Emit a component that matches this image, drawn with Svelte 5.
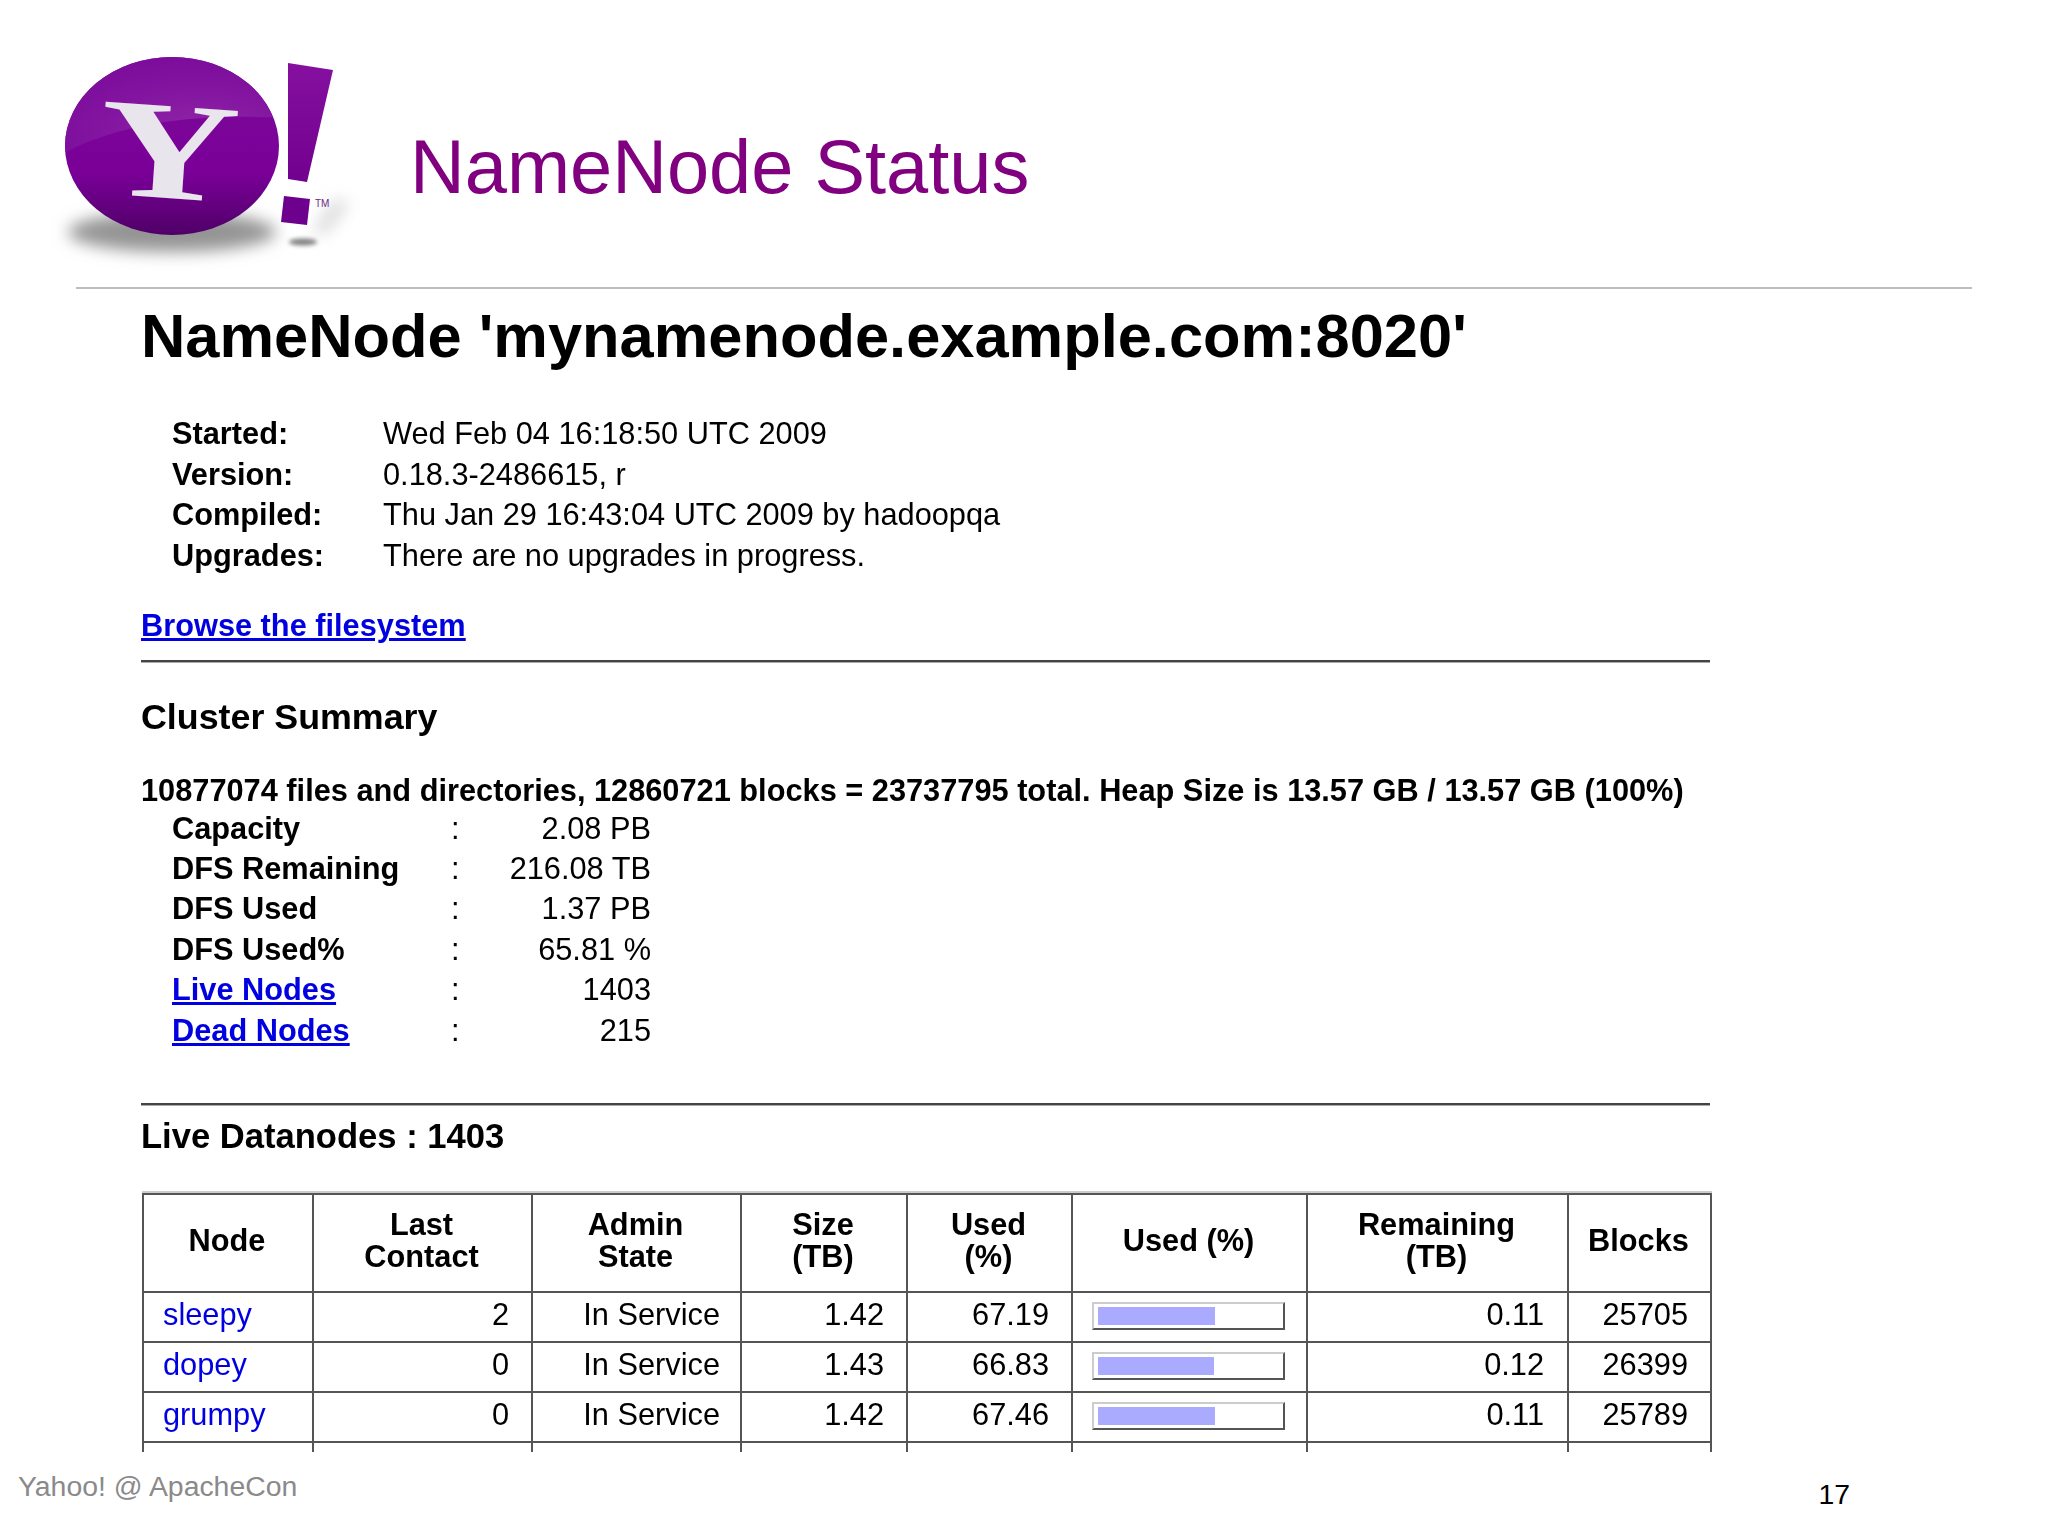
<script>
	const info = [
		['Started:', 'Wed Feb 04 16:18:50 UTC 2009'],
		['Version:', '0.18.3-2486615, r'],
		['Compiled:', 'Thu Jan 29 16:43:04 UTC 2009 by hadoopqa'],
		['Upgrades:', 'There are no upgrades in progress.']
	];
	const stats = [
		{ name: 'Capacity', value: '2.08 PB' },
		{ name: 'DFS Remaining', value: '216.08 TB' },
		{ name: 'DFS Used', value: '1.37 PB' },
		{ name: 'DFS Used%', value: '65.81 %' },
		{ name: 'Live Nodes', value: '1403', link: true },
		{ name: 'Dead Nodes', value: '215', link: true }
	];
	const nodes = [
		{ name: 'sleepy', contact: 2, size: '1.42', used: '67.19', remaining: '0.11', blocks: 25705 },
		{ name: 'dopey', contact: 0, size: '1.43', used: '66.83', remaining: '0.12', blocks: 26399 },
		{ name: 'grumpy', contact: 0, size: '1.42', used: '67.46', remaining: '0.11', blocks: 25789 }
	];
</script>

<div class="slide">
	<header>
		<svg class="logo" width="320" height="230" viewBox="40 40 320 230" role="img" aria-label="Yahoo! logo">
			<defs>
				<linearGradient id="ball" x1="0" y1="0" x2="0" y2="1">
					<stop offset="0" stop-color="#7d0a9a" />
					<stop offset="0.65" stop-color="#7a0098" />
					<stop offset="1" stop-color="#4f0068" />
				</linearGradient>
				<linearGradient id="bang" x1="0" y1="0" x2="0" y2="1">
					<stop offset="0" stop-color="#85109f" />
					<stop offset="1" stop-color="#72008f" />
				</linearGradient>
				<radialGradient id="shine" cx="0.62" cy="0.8" r="0.75">
					<stop offset="0" stop-color="#9126a6" />
					<stop offset="0.6" stop-color="#8214a0" />
					<stop offset="1" stop-color="#7c0c9b" />
				</radialGradient>
				<clipPath id="ballClip"><ellipse cx="172" cy="146" rx="107" ry="89" /></clipPath>
				<filter id="soft" x="-30%" y="-80%" width="160%" height="260%"><feGaussianBlur stdDeviation="8" /></filter>
				<filter id="softer" x="-50%" y="-100%" width="200%" height="300%"><feGaussianBlur stdDeviation="2" /></filter>
			</defs>
			<ellipse cx="172" cy="232" rx="104" ry="20" fill="#949494" filter="url(#soft)" />
			<path d="M312 232 L334 200 L350 202 L326 234 Z" fill="#d8d8d8" filter="url(#soft)" />
			<ellipse cx="303" cy="242" rx="14" ry="3.5" fill="#808080" filter="url(#softer)" />
			<ellipse cx="172" cy="146" rx="107" ry="89" fill="url(#ball)" />
			<path d="M60 155 C110 128 180 112 282 118 L282 50 L60 50 Z" fill="url(#shine)" clip-path="url(#ballClip)" />
			<text class="y-mark" transform="translate(96 193) rotate(4) scale(1.38 1)" font-size="140">Y</text>
			<polygon points="288,63 333,70 307,182 288,179" fill="url(#bang)" />
			<polygon points="284,196 310,199 307,225 281,222" fill="#6d008c" />
			<text class="tm" x="315" y="207">TM</text>
		</svg>
		<div class="title">NameNode Status</div>
	</header>
	<div class="rule"></div>

	<main class="shot">
		<h1>NameNode 'mynamenode.example.com:8020'</h1>
		<div class="info">
			{#each info as row}
				<b>{row[0]}</b>
				<span>{row[1]}</span>
			{/each}
		</div>
		<a class="browse" href="#top">Browse the filesystem</a>
		<div class="bar-rule first"></div>
		<h2 class="cluster">Cluster Summary</h2>
		<div class="summary">10877074 files and directories, 12860721 blocks = 23737795 total. Heap Size is 13.57 GB / 13.57 GB (100%)</div>
		<div class="stats">
			{#each stats as stat}
				{#if stat.link}
					<a class="stat-name" href="#top">{stat.name}</a>
				{:else}
					<b class="stat-name">{stat.name}</b>
				{/if}
				<span>:</span>
				<span class="num">{stat.value}</span>
			{/each}
		</div>
		<div class="bar-rule second"></div>
		<h2 class="live">Live Datanodes : 1403</h2>
		<table>
			<colgroup>
				<col class="c-node" />
				<col class="c-contact" />
				<col class="c-state" />
				<col class="c-size" />
				<col class="c-used" />
				<col class="c-meter" />
				<col class="c-rem" />
				<col class="c-blocks" />
			</colgroup>
			<thead>
				<tr>
					<th>Node</th>
					<th>Last<br />Contact</th>
					<th>Admin<br />State</th>
					<th>Size<br />(TB)</th>
					<th>Used<br />(%)</th>
					<th>Used (%)</th>
					<th>Remaining<br />(TB)</th>
					<th>Blocks</th>
				</tr>
			</thead>
			<tbody>
				{#each nodes as node}
					<tr>
						<td class="left"><a href="#top">{node.name}</a></td>
						<td>{node.contact}</td>
						<td class="state">In Service</td>
						<td>{node.size}</td>
						<td>{node.used}</td>
						<td class="meter-cell">
							<div class="meter"><div class="fill" style="width: {node.used * 0.96}%"></div></div>
						</td>
						<td class="rem">{node.remaining}</td>
						<td class="blocks">{node.blocks}</td>
					</tr>
				{/each}
				<tr class="cut">
					<td></td><td></td><td></td><td></td><td></td><td></td><td></td><td></td>
				</tr>
			</tbody>
		</table>
	</main>

	<footer>
		<span class="credit">Yahoo! @ ApacheCon</span>
		<span class="page">17</span>
	</footer>
</div>

<style>
	:global(body) {
		background: #fff;
	}
	.slide {
		width: 2048px;
		height: 1536px;
		overflow: hidden;
		font-family: 'Liberation Sans', Arial, sans-serif;
		color: #000;
	}
	header {
		display: flex;
		align-items: flex-start;
		height: 287px;
		padding: 40px 0 0 40px;
		box-sizing: border-box;
	}
	.logo {
		flex: none;
	}
	.y-mark {
		font-family: 'Liberation Serif', serif;
		font-weight: 700;
		fill: #e9e5ec;
	}
	.tm {
		font-family: 'Liberation Sans', sans-serif;
		font-size: 10px;
		fill: #6d2a85;
	}
	.title {
		margin: 82px 0 0 50px;
		font-size: 75.8px;
		line-height: 90px;
		color: #800080;
	}
	.rule {
		height: 2px;
		margin: 0 76px;
		background: #bdbdbd;
	}
	.shot {
		height: 1163px;
		overflow: hidden;
		padding-left: 141px;
		font-size: 30.75px;
		filter: blur(0.5px);
	}
	h1 {
		margin: 11px 0 42px;
		font-size: 61.4px;
		line-height: 72px;
		font-weight: 700;
	}
	.info {
		display: grid;
		grid-template-columns: 211px 1fr;
		grid-auto-rows: 40.6px;
		align-items: center;
		padding-left: 31px;
	}
	a {
		color: #0000e0;
	}
	.browse {
		display: block;
		width: fit-content;
		margin-top: 30px;
		font-weight: 700;
		line-height: 40px;
	}
	.bar-rule {
		width: 1569px;
		height: 3px;
		background: linear-gradient(#444 0 60%, #aaa 60%);
	}
	.bar-rule.first {
		margin-top: 14px;
	}
	.bar-rule.second {
		margin-top: 52px;
	}
	h2 {
		line-height: 44px;
		font-weight: 700;
	}
	.cluster {
		margin: 32px 0 35px;
		font-size: 35.8px;
	}
	.live {
		margin: 8px 0 35px;
		font-size: 34.6px;
	}
	.summary {
		font-weight: 700;
		line-height: 34px;
	}
	.stats {
		display: grid;
		grid-template-columns: 279px 20px 180px;
		grid-auto-rows: 40.4px;
		align-items: center;
		padding-left: 31px;
	}
	.stat-name {
		font-weight: 700;
	}
	.num {
		text-align: right;
	}
	table {
		width: 1568px;
		margin-left: 1px;
		table-layout: fixed;
		border-collapse: collapse;
		box-shadow: 0 -2px 0 #ccc;
	}
	.c-node { width: 170px; }
	.c-contact { width: 219px; }
	.c-state { width: 209px; }
	.c-size { width: 166px; }
	.c-used { width: 165px; }
	.c-meter { width: 235px; }
	.c-rem { width: 261px; }
	.c-blocks { width: 143px; }
	th,
	td {
		border: 2px solid #555;
		box-sizing: border-box;
		padding: 0 22px 3px 19px;
	}
	th {
		height: 98px;
		padding-right: 21px;
		line-height: 32.5px;
		font-weight: 700;
		text-align: center;
	}
	td {
		height: 50px;
		text-align: right;
		line-height: 36px;
	}
	td.left {
		text-align: left;
	}
	td.state {
		padding-right: 20px;
	}
	td.rem {
		padding-right: 23px;
	}
	td.blocks {
		padding-right: 22px;
	}
	td a {
		text-decoration: none;
	}
	td.meter-cell {
		padding-bottom: 1px;
	}
	.meter {
		box-sizing: border-box;
		width: 193px;
		height: 28px;
		padding: 3px 4px;
		border: 2px solid;
		border-color: #ccc #555 #555 #ccc;
		background: #fff;
	}
	.fill {
		max-width: 100%;
		height: 100%;
		background: #aaaaff;
	}
	.cut td {
		height: 40px;
	}
	footer {
		display: flex;
		justify-content: space-between;
		padding: 16px 198px 0 18px;
		font-size: 28.4px;
	}
	.credit {
		color: #8a8a8a;
		line-height: 36px;
	}
	.page {
		margin-top: 8px;
		color: #000;
		line-height: 36px;
	}
</style>
